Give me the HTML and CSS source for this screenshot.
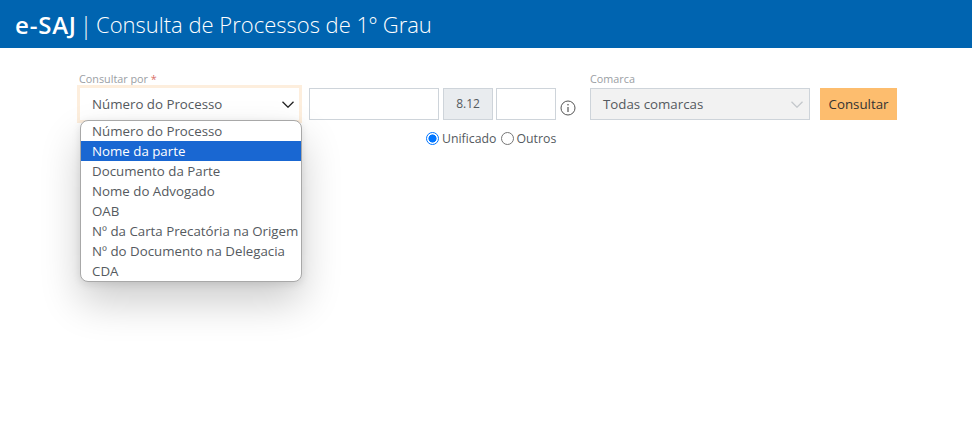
FILE: index.html
```html
<!DOCTYPE html>
<html lang="pt-BR">
<head>
<meta charset="utf-8">
<title>e-SAJ | Consulta de Processos de 1º Grau</title>
<link rel="stylesheet" href="styles.css">
</head>
<body>
<header class="topbar">
  <span class="brand">e-SAJ</span><span class="divider">|</span><span class="title">Consulta de Processos de 1º Grau</span>
</header>
<main class="form">
  <div class="field field-by">
    <label class="label">Consultar por <span class="req">*</span></label>
    <div class="select select-focus">
      <span>Número do Processo</span>
      <svg class="chev" width="12" height="7" viewBox="0 0 12 7"><path d="M.5.7L6 6.2 11.5.7" fill="none" stroke="#222" stroke-width="1.3"/></svg>
    </div>
    <ul class="menu">
      <li>Número do Processo</li>
      <li class="active">Nome da parte</li>
      <li>Documento da Parte</li>
      <li>Nome do Advogado</li>
      <li>OAB</li>
      <li>Nº da Carta Precatória na Origem</li>
      <li>Nº do Documento na Delegacia</li>
      <li>CDA</li>
    </ul>
  </div>
  <div class="number">
    <div class="number-row">
      <div class="box box-a"></div>
      <div class="box box-code">8.12</div>
      <div class="box box-b"></div>
      <svg class="info" width="16" height="16" viewBox="0 0 16 16"><circle cx="8" cy="8" r="7" fill="none" stroke="#555" stroke-width="1"/><path d="M8 7v5" stroke="#555" stroke-width="1.2"/><circle cx="8" cy="4.8" r=".8" fill="#555"/></svg>
    </div>
    <div class="radios">
      <span class="radio radio-on"></span><span class="radio-text">Unificado</span>
      <span class="radio"></span><span class="radio-text">Outros</span>
    </div>
  </div>
  <div class="field field-comarca">
    <label class="label">Comarca</label>
    <div class="select select-off">
      <span>Todas comarcas</span>
      <svg class="chev" width="12" height="7" viewBox="0 0 12 7"><path d="M.5.7L6 6.2 11.5.7" fill="none" stroke="#c4c8cc" stroke-width="1.3"/></svg>
    </div>
  </div>
  <button class="submit" type="button">Consultar</button>
</main>
</body>
</html>
```
FILE: styles.css
```css
* { box-sizing: border-box; }
html, body { margin: 0; padding: 0; background: #fff; }
body { font-family: "Open Sans", "Noto Sans", sans-serif; color: #555a60; overflow: hidden; height: 422px; }
.topbar { height: 48px; background: #0064b0; color: #fff; display: flex; align-items: center; padding-left: 15px; }
.brand { font-size: 24px; font-weight: 600; letter-spacing: .8px; width: 61px; white-space: nowrap; }
.divider { width: 20px; text-align: center; font-size: 24px; font-weight: 300; color: #f0f6fb; }
.title { font-size: 22px; font-weight: 300; white-space: nowrap; }
.form { display: flex; align-items: flex-start; padding: 23px 0 0 80px; }
.field { position: relative; display: flex; flex-direction: column; }
.field-by { width: 220px; }
.field-comarca { width: 220px; }
.label { font-size: 10.8px; line-height: 15px; margin-bottom: 2px; color: #9a9ea3; margin-left: -1px; }
.field-comarca .label { margin-left: 0; }
.req { color: #d9706a; }
.select { height: 32px; display: flex; align-items: center; justify-content: space-between; font-size: 13.3px; }
.select-focus { width: 219px; padding: 0 5px 0 12px; background: #fff; box-shadow: 0 0 0 3px #fdeedd; }
.select-off { background: #f2f2f2; border: 1px solid #ced4da; padding: 0 6px 0 12px; }
.menu { position: absolute; left: 0; top: 49px; width: 222px; margin: 0; padding: 0; list-style: none; background: #fff; border: 1px solid #a8a8a8; border-radius: 8px; box-shadow: 0 20px 40px rgba(0,0,0,.2), 0 2px 8px rgba(0,0,0,.1); font-size: 13.3px; overflow: hidden; }
.menu li { height: 20px; line-height: 20px; padding-left: 11px; white-space: nowrap; }
.menu .active { background: #1967d2; color: #fff; font-weight: 500; }
.number { margin-left: 9px; padding-top: 17px; width: 281px; }
.number-row { display: flex; align-items: flex-start; }
.box { flex: none; height: 32px; border: 1px solid #ced4da; background: #fff; }
.box-a { width: 130px; }
.box-code { width: 50px; margin-left: 4px; background: #e9ecef; font-size: 12px; line-height: 30px; text-align: center; }
.box-b { width: 60px; margin-left: 3px; }
.info { margin: 12px 0 0 4px; }
.radios { display: flex; align-items: center; height: 20px; margin-top: 8px; padding-left: 117px; font-size: 12.3px; }
.radio { flex: none; width: 13px; height: 13px; border: 1px solid #767676; border-radius: 50%; background: #fff; }
.radio-on { border: 1.5px solid #0075ff; background: radial-gradient(circle, #0075ff 0 3.8px, #fff 4.3px); }
.radio-text { margin: 0 4px 0 3px; }
.submit { margin: 17px 0 0 10px; width: 77px; height: 32px; border: 0; background: #fdbd6e; color: #333; font: 13.3px "Open Sans", "Noto Sans", sans-serif; padding: 0; }
```
